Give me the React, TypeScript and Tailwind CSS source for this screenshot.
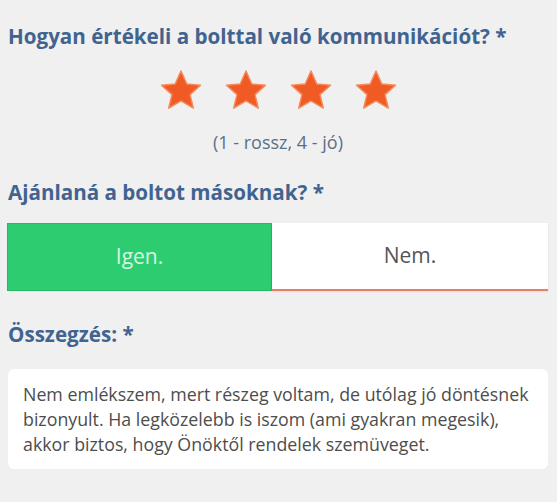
const Star = () => (
	<svg width="44" height="42" viewBox="0 0 44 42" aria-hidden="true">
		<polygon
			points="22,2 27.8,15 41.5,16.3 31,25.6 34.3,39.1 22,31.9 9.7,39.1 13,25.6 2.5,16.3 16.2,15"
			fill="#f05a24"
			stroke="#f58a5c"
			strokeWidth="1.5"
			strokeLinejoin="round"
		/>
	</svg>
);

export default function App() {
	return (
		<div className="w-[557px] h-[502px] bg-[#f0f0f0] pl-2 pr-[9px] pt-[24px] font-['Open_Sans',sans-serif] overflow-hidden">
			{/* Rating */}
			<h2 className="text-[20.6px] leading-[25px] font-bold text-[#41638f]">
				Hogyan értékeli a bolttal való kommunikációt? *
			</h2>
			<div className="mt-[20px] flex justify-center gap-[21px]">
				<Star />
				<Star />
				<Star />
				<Star />
			</div>
			<p className="mt-[19px] text-center text-[18px] leading-[24px] text-[#5b6f88]">
				(1 - rossz, 4 - jó)
			</p>

			{/* Recommend */}
			<h2 className="mt-[26px] text-[20.6px] leading-[25px] font-bold text-[#41638f]">
				Ajánlaná a boltot másoknak? *
			</h2>
			<div className="mt-[18px] flex h-[68px] -ml-px">
				<button className="w-[265px] bg-[#2ecc71] border border-[#27b864] text-[21px] text-[#d6f8e2]">
					Igen.
				</button>
				<button className="flex-1 bg-white border-b-2 border-[#e3806c] text-[21px] text-[#555555] shadow-[0_1px_2px_rgba(0,0,0,0.08)]">
					Nem.
				</button>
			</div>

			{/* Summary */}
			<h2 className="mt-[31px] text-[20.6px] leading-[25px] font-bold text-[#41638f]">
				Összegzés: *
			</h2>
			<div className="mt-[22px] bg-white rounded-md pl-[15px] pr-[8px] pt-[13px] pb-[12px] text-[17.8px] leading-[25px] text-[#4d4d4d]">
				Nem emlékszem, mert részeg voltam, de utólag jó döntésnek bizonyult. Ha legközelebb is iszom (ami gyakran megesik), akkor biztos, hogy Önöktől rendelek szemüveget.
			</div>
		</div>
	);
}
